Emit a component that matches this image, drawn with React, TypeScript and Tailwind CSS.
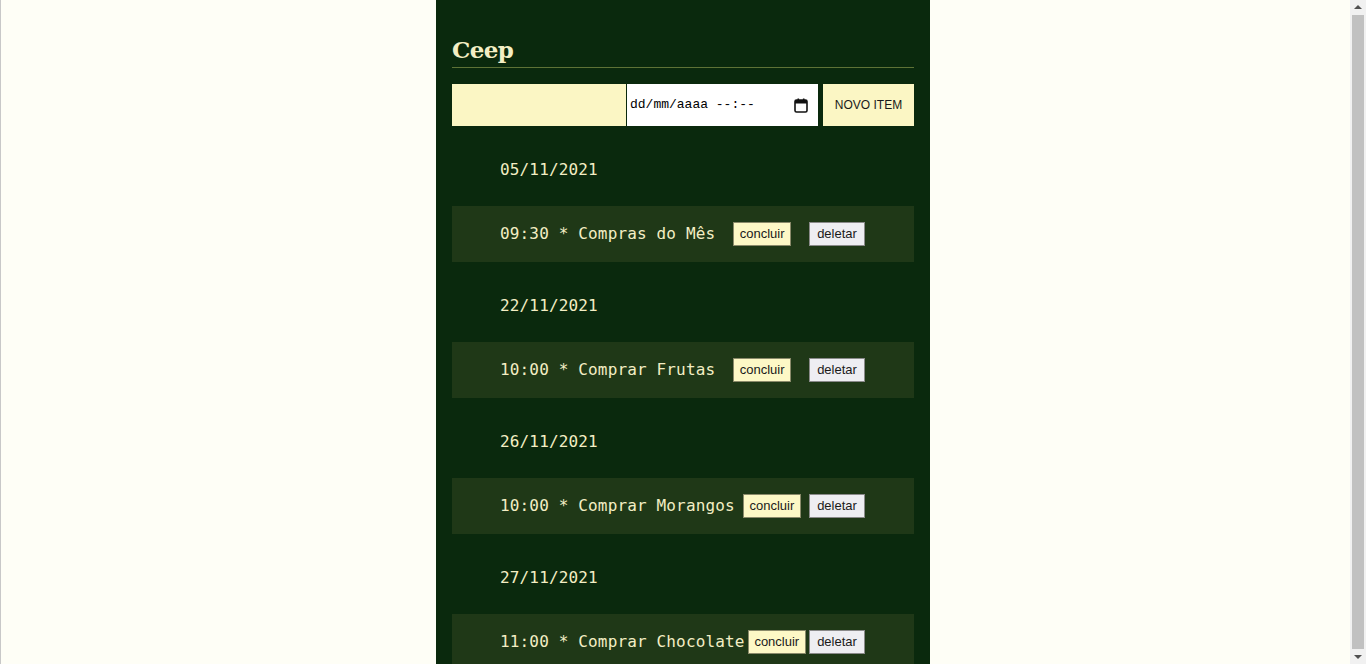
const items = [
  { date: "05/11/2021", time: "09:30", title: "Compras do Mês" },
  { date: "22/11/2021", time: "10:00", title: "Comprar Frutas" },
  { date: "26/11/2021", time: "10:00", title: "Comprar Morangos" },
  { date: "27/11/2021", time: "11:00", title: "Comprar Chocolate" },
];

function CalendarIcon() {
  return (
    <svg width="14" height="15" viewBox="0 0 14 15" aria-hidden>
      <rect x="1" y="2" width="12" height="12" rx="1.5" fill="none" stroke="#111" strokeWidth="1.6" />
      <rect x="1" y="2" width="12" height="3.5" fill="#111" />
      <rect x="3.5" y="0.5" width="1.6" height="3" fill="#111" />
      <rect x="8.9" y="0.5" width="1.6" height="3" fill="#111" />
    </svg>
  );
}

function Scrollbar() {
  return (
    <div className="absolute right-0 top-0 flex h-full w-[16px] flex-col bg-[#f1f1f1]">
      <div className="flex h-[14px] items-center justify-center">
        <div className="h-0 w-0 border-x-[4px] border-b-[4px] border-x-transparent border-b-[#505050]" />
      </div>
      <div className="flex-1 px-[2px] py-[1px]">
        <div className="h-full w-full bg-[#c1c1c1]" />
      </div>
      <div className="flex h-[14px] items-center justify-center">
        <div className="h-0 w-0 border-x-[4px] border-t-[4px] border-x-transparent border-t-[#505050]" />
      </div>
    </div>
  );
}

export default function App() {
  return (
    <div className="relative h-screen overflow-hidden bg-[#fefef6] shadow-[inset_1px_0_0_#c8c8c8]">
      <main className="mx-auto min-h-[720px] w-[494px] bg-[#0a290d] px-4 pt-[33px] pb-10 font-['DejaVu_Sans_Mono',monospace] text-[#f3eec4]">
        <h1 className="h-[35px] border-b border-[#5e7236] font-['DejaVu_Serif',serif] text-[23px] font-bold leading-[33px] tracking-[-0.6px] text-[#f3eec4]">
          Ceep
        </h1>

        <form className="mt-[16px] flex h-[42px]" onSubmit={(e) => e.preventDefault()}>
          <input
            type="text"
            aria-label="Título"
            className="h-full w-[174px] bg-[#fbf6c4] px-2 text-black outline-none"
          />
          <div className="ml-px flex h-full w-[191px] items-center justify-between bg-white pl-[3px] pr-[10px] font-['Liberation_Mono',monospace] text-[13px] text-black">
            <span>dd/mm/aaaa --:--</span>
            <CalendarIcon />
          </div>
          <button
            type="submit"
            className="ml-[5px] h-full w-[91px] bg-[#fbf6c4] font-['Liberation_Sans',Arial,sans-serif] text-[12px] text-[#1a1a1a]"
          >
            NOVO ITEM
          </button>
        </form>

        <ul>
          {items.map((item) => (
            <li key={item.date}>
              <div className="flex h-[80px] items-center pl-12 pt-2 text-[16px] tracking-[0.15px]">{item.date}</div>
              <div className="flex h-[56px] items-center justify-between bg-[#1f3817] pl-12 pr-[49px] text-[16px] tracking-[0.15px]">
                <span className="whitespace-nowrap">
                  {item.time} * {item.title}
                </span>
                <button className="h-[24px] w-[58px] border border-[#8a8a6a] bg-[#fdf8c6] font-['Liberation_Sans',Arial,sans-serif] text-[13px] tracking-normal text-[#1a1a1a]">
                  concluir
                </button>
                <button className="h-[24px] w-[56px] border border-[#8a8a8a] bg-[#eeeef2] font-['Liberation_Sans',Arial,sans-serif] text-[13px] tracking-normal text-[#1a1a1a]">
                  deletar
                </button>
              </div>
            </li>
          ))}
        </ul>
      </main>
      <Scrollbar />
    </div>
  );
}
